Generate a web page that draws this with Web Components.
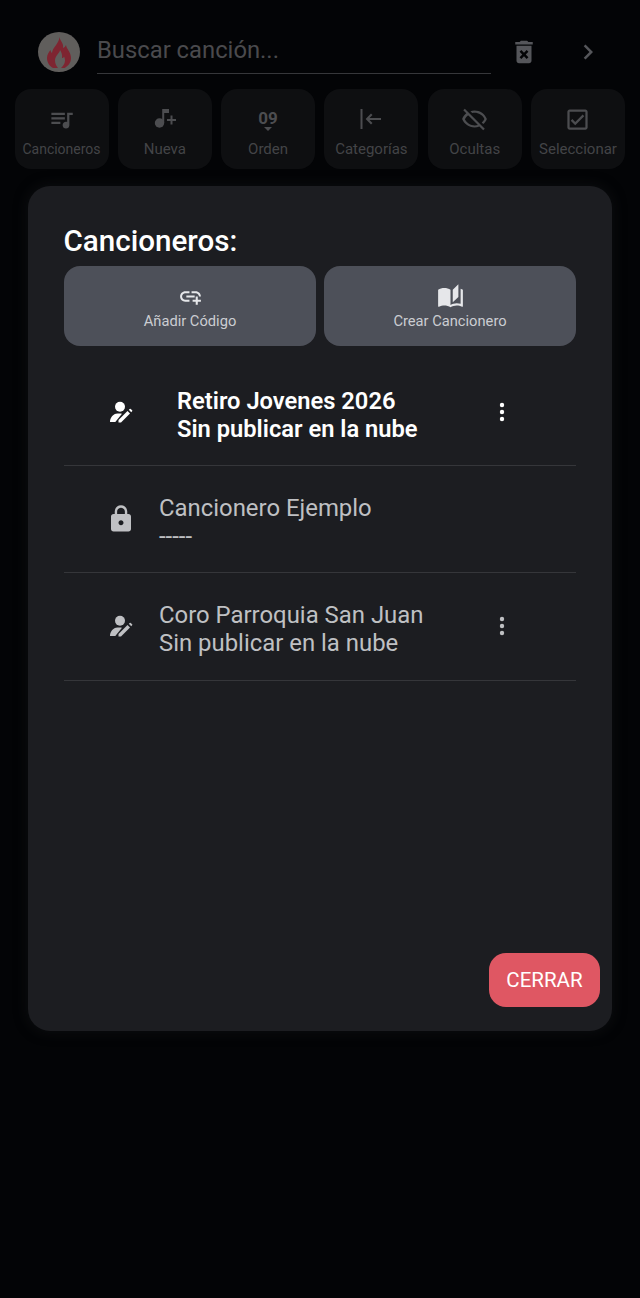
<!doctype html>
<html lang="es">
<head>
<meta charset="utf-8">
<title>Cancioneros</title>
<style>
  html, body { margin: 0; padding: 0; background: #030406; }
  body { width: 640px; height: 1298px; overflow: hidden; font-family: Roboto, "Noto Sans", sans-serif; }
</style>
</head>
<body>
<app-header></app-header>
<tool-bar>
  <tool-button tight label="Cancioneros" icon="queue"></tool-button>
  <tool-button label="Nueva" icon="noteadd"></tool-button>
  <tool-button label="Orden" icon="order"></tool-button>
  <tool-button label="Categorías" icon="tab"></tool-button>
  <tool-button label="Ocultas" icon="eyeoff"></tool-button>
  <tool-button label="Seleccionar" icon="check"></tool-button>
</tool-bar>
<song-dialog heading="Cancioneros:">
  <action-button slot="actions" label="Añadir Código" icon="addlink" size="25"></action-button>
  <action-button slot="actions" label="Crear Cancionero" icon="book" size="27"></action-button>
  <book-row selected icon="editor" more title-text="Retiro Jovenes 2026" sub="Sin publicar en la nube"></book-row>
  <book-row icon="lock" title-text="Cancionero Ejemplo" sub="-----"></book-row>
  <book-row icon="editor" more title-text="Coro Parroquia San Juan" sub="Sin publicar en la nube"></book-row>
  <close-button slot="footer">CERRAR</close-button>
</song-dialog>

<script>
const ICONS = {
  queue: '<path d="M15 6H3v2h12V6zm0 4H3v2h12v-2zM3 16h8v-2H3v2zM17 6v8.18c-.31-.11-.65-.18-1-.18-1.66 0-3 1.34-3 3s1.34 3 3 3 3-1.34 3-3V8h3V6h-5z"/>',
  noteadd: '<circle cx="6.500" cy="16" r="4.700"/><path d="M9.200 2H16v4h-4.800v10H9.200z"/><path d="M17.500 8.500h2v3.500H23v2h-3.500v3.500h-2V14H14v-2h3.500z"/>',
  tab: '<path d="M1.500 2h2v20h-2z"/><path d="M22 11H10.500l3-3L12 6.600 6.600 12l5.400 5.400 1.500-1.400-3-3H22z"/>',
  eyeoff: '<path d="M12 6c3.79 0 7.17 2.13 8.82 5.500-.59 1.220-1.420 2.270-2.410 3.120l1.410 1.410c1.390-1.230 2.490-2.770 3.180-4.530C21.270 7.110 17 4 12 4c-1.270 0-2.490.2-3.640.57l1.650 1.650C10.660 6.090 11.320 6 12 6zM2.010 3.870l2.680 2.680C3.060 7.830 1.770 9.530 1 11.500 2.730 15.890 7 19 12 19c1.520 0 2.980-.29 4.320-.82l3.420 3.420 1.410-1.410L3.420 2.450 2.010 3.870zm4.100 4.100l7.910 7.910 .98.98c-.88.24-1.800.38-2.750.38-3.790 0-7.170-2.130-8.820-5.500.7-1.430 1.720-2.610 2.930-3.530z"/>',
  check: '<path d="M19 3H5c-1.100 0-2 .9-2 2v14c0 1.100.9 2 2 2h14c1.100 0 2-.9 2-2V5c0-1.100-.9-2-2-2zm0 16H5V5h14v14zM17.990 9l-1.410-1.420-6.590 6.590-2.580-2.570-1.420 1.410 4 3.990z"/>',
  trash: '<path d="M6 19c0 1.100.9 2 2 2h8c1.100 0 2-.9 2-2V7H6v12zm2.460-7.120l1.410-1.410L12 12.590l2.120-2.120 1.410 1.410L13.410 14l2.120 2.120-1.410 1.410L12 15.410l-2.120 2.120-1.410-1.410L10.590 14l-2.130-2.120zM15.500 4l-1-1h-5l-1 1H5v2h14V4z"/>',
  chevron: '<path d="M10 6L8.590 7.410 13.170 12l-4.580 4.590L10 18l6-6z"/>',
  addlink: '<path d="M8 11h8v2H8zm12.100 1H22c0-2.760-2.240-5-5-5h-4v1.900h4c1.710 0 3.100 1.390 3.100 3.100zM3.900 12c0-1.710 1.390-3.100 3.100-3.100h4V7H7c-2.760 0-5 2.240-5 5s2.240 5 5 5h4v-1.900H7c-1.710 0-3.100-1.390-3.100-3.100zM19 12h-2v3h-3v2h3v3h2v-3h3v-2h-3z"/>',
  book: '<path d="M19 1l-5 5v11l5-4.500V1zM1 6v14.650c0 .25.25.5.5.5.1 0 .15-.05.25-.05C3.100 20.450 5.050 20 6.500 20c1.950 0 4.050.4 5.500 1.500V6c-1.450-1.100-3.550-1.500-5.500-1.500S2.450 4.900 1 6zm22 13.500V6c-.6-.45-1.250-.75-2-1v13.500c-1.100-.35-2.300-.5-3.500-.5-1.700 0-4.150.65-5.500 1.500v2c1.350-.85 3.800-1.500 5.500-1.500 1.650 0 3.350.3 4.750 1.050.1.05.15.05.25.05.25 0 .5-.25.5-.5v-1.100z"/>',
  editor: '<circle cx="11" cy="6.700" r="5"/><path d="M1 22c0-4 3-7.600 6-8.200 2-.4 4-.4 6-.1L6.300 22z"/><path d="M9.500 22.500V20l9-9 2.500 2.500-9 9z"/><path d="M19.800 9.800l.9-.9a.8.8 0 0 1 1.100 0l1.300 1.300a.8.8 0 0 1 0 1.100l-.9.9z"/>',
  lock: '<path d="M18 8h-1V6c0-2.760-2.240-5-5-5S7 3.240 7 6v2H6c-1.100 0-2 .9-2 2v10c0 1.100.9 2 2 2h12c1.100 0 2-.9 2-2V10c0-1.100-.9-2-2-2zm-6 9c-1.100 0-2-.9-2-2s.9-2 2-2 2 .9 2 2-.9 2-2 2zm3.100-9H8.900V6c0-1.710 1.390-3.100 3.100-3.100 1.710 0 3.100 1.390 3.100 3.100v2z"/>',
  more: '<circle cx="12" cy="5" r="2.200"/><circle cx="12" cy="12" r="2.200"/><circle cx="12" cy="19" r="2.200"/>'
}

function svgIcon (name, size) {
  return `<svg width="${size}" height="${size}" viewBox="0 0 24 24" fill="currentColor" aria-hidden="true">${ICONS[name]}</svg>`
}

class AppHeader extends HTMLElement {
  constructor () {
    super()
    this.attachShadow({mode: 'open'})
  }

  connectedCallback () {
    this.shadowRoot.innerHTML = `<style>
      :host { display: flex; align-items: flex-start; height: 89px; padding: 32px 0 0 38px; box-sizing: border-box; color: #55565a; }
      .logo { flex: none; width: 42px; height: 40px; border-radius: 50%; background: #605e5c; display: flex; align-items: center; justify-content: center; }
      .search { margin-left: 17px; width: 394px; height: 42px; box-sizing: border-box; border-bottom: 1px solid #36373a; font-size: 23.800px; line-height: 36px; color: #4a4a4d; }
      .btn { flex: none; display: flex; justify-content: center; height: 30px; padding-top: 5px; }
      .trash { width: 30px; margin-left: 18px; }
      .chev { width: 30px; margin-left: 34px; }
    </style>
    <div class="logo">
      <svg width="24" height="31" viewBox="0 0 24 31" fill="#7e2531" aria-hidden="true">
        <path fill-rule="evenodd" d="M12.500 0C13 4 17 6 16 11c1.200-.5 2.400-1.500 3-3 .5 4 5 7 5 13 0 5-3 8-6.500 10H6C2.500 29 0 25.500 0 21c0-3.500 2-6 3.500-8 .2 1.500.7 2.500 1.500 3 .5-6 7-9 7.500-16zM13 13c0 3-5 5.500-5 10.500 0 3 1.500 5.500 3 7.500h3c1.500-1.500 4-4 4-7.500 0-1.500-.5-3-1-4-.5 1-1 1.500-2 1.500 .5-3-.5-6-2-8z"/>
      </svg>
    </div>
    <div class="search">Buscar canción...</div>
    <div class="btn trash">${svgIcon('trash', 30)}</div>
    <div class="btn chev">${svgIcon('chevron', 30)}</div>`
  }
}

class ToolBar extends HTMLElement {
  constructor () {
    super()
    this.attachShadow({mode: 'open'})
    this.shadowRoot.innerHTML = `<style>
      :host { display: grid; grid-template-columns: repeat(6, 94px); column-gap: 9.300px; padding-left: 14.500px; height: 80px; }
    </style><slot></slot>`
  }
}

class ToolButton extends HTMLElement {
  constructor () {
    super()
    this.attachShadow({mode: 'open'})
  }

  connectedCallback () {
    const icon = this.getAttribute('icon')
    let glyph = svgIcon(icon, icon === 'noteadd' || icon === 'tab' ? 24 : 27)
    if (icon === 'order') {
      glyph = `<div class="order"><span>09</span><svg width="8" height="4" viewBox="0 0 10 5" fill="currentColor" aria-hidden="true"><path d="M0 0h10L5 5z"/></svg></div>`
    }
    this.shadowRoot.innerHTML = `<style>
      :host { display: flex; flex-direction: column; align-items: center; height: 80px; box-sizing: border-box; padding-top: 18px; background: #0e0f11; border-radius: 16px; color: #434447; }
      .ico { height: 24px; display: flex; align-items: center; justify-content: center; color: #4c4d50; }
      .label { margin-top: 8px; font-size: 15px; line-height: 20px; white-space: nowrap; }
      :host([tight]) .label { font-size: 14px; }
      .order { display: flex; flex-direction: column; align-items: center; height: 24px; }
      .order span { font-size: 17px; font-weight: 700; line-height: 18px; margin-top: 2px; }
      .order svg { margin-top: 0; }
    </style>
    <div class="ico">${glyph}</div>
    <div class="label">${this.getAttribute('label')}</div>`
  }
}

class SongDialog extends HTMLElement {
  constructor () {
    super()
    this.attachShadow({mode: 'open'})
  }

  connectedCallback () {
    this.shadowRoot.innerHTML = `<style>
      :host { display: flex; flex-direction: column; width: 584px; height: 845px; margin: 17px 0 0 28px; box-sizing: border-box; background: #1c1d21; border-radius: 22px; padding: 32px 12px 24px 36px; box-shadow: 0 0 12px 2px rgba(12,13,15,.9); }
      h2 { margin: 0 0 0 -.5px; font-size: 29.600px; font-weight: 500; line-height: 46px; height: 48px; color: #fff; }
      .actions { display: flex; gap: 8px; width: 512px; }
      .list { margin-top: 12.400px; width: 512px; flex: 1; }
      .footer { display: flex; justify-content: flex-end; }
    </style>
    <h2>${this.getAttribute('heading')}</h2>
    <div class="actions"><slot name="actions"></slot></div>
    <div class="list"><slot></slot></div>
    <div class="footer"><slot name="footer"></slot></div>`
  }
}

class ActionButton extends HTMLElement {
  constructor () {
    super()
    this.attachShadow({mode: 'open'})
  }

  connectedCallback () {
    this.shadowRoot.innerHTML = `<style>
      :host { flex: 1; display: flex; flex-direction: column; align-items: center; height: 80px; box-sizing: border-box; padding-top: 18px; background: #4d5059; border-radius: 16px; color: #e6e7ea; }
      .ico { height: 24px; display: flex; align-items: center; justify-content: center; }
      .label { margin-top: 3px; font-size: 14.700px; line-height: 20px; color: #cbcdd2; }
    </style>
    <div class="ico">${svgIcon(this.getAttribute('icon'), this.getAttribute('size'))}</div>
    <div class="label">${this.getAttribute('label')}</div>`
  }
}

class BookRow extends HTMLElement {
  constructor () {
    super()
    this.attachShadow({mode: 'open'})
  }

  connectedCallback () {
    const more = this.hasAttribute('more') ? svgIcon('more', 24) : ''
    const icon = this.getAttribute('icon')
    this.shadowRoot.innerHTML = `<style>
      :host { display: flex; align-items: center; height: 107.400px; box-sizing: border-box; padding: 0 62px 0 45px; border-bottom: 1px solid #35363a; color: #bfc0c3; }
      :host([selected]) { color: #fff; }
      .ico { flex: none; width: 24px; height: 24px; display: flex; align-items: center; justify-content: center; }
      .ico svg { flex: none; }
      .text { flex: 1; padding: 6px 0 0 26px; font-size: 23.900px; line-height: 28px; white-space: nowrap; }
      :host([selected]) .text { padding-left: 44px; font-weight: 600; font-size: 23.700px; }
      .more { flex: none; width: 24px; height: 24px; margin-left: -24px; }
    </style>
    <div class="ico">${svgIcon(icon, icon === 'lock' ? 30 : 24)}</div>
    <div class="text"><div>${this.getAttribute('title-text')}</div><div>${this.getAttribute('sub')}</div></div>
    <div class="more">${more}</div>`
  }
}

class CloseButton extends HTMLElement {
  constructor () {
    super()
    this.attachShadow({mode: 'open'})
    this.shadowRoot.innerHTML = `<style>
      :host { display: flex; align-items: center; justify-content: center; width: 111px; height: 54px; background: #df5763; border-radius: 17px; color: #fff; font-size: 20.500px; }
    </style><slot></slot>`
  }
}

customElements.define('app-header', AppHeader)
customElements.define('tool-bar', ToolBar)
customElements.define('tool-button', ToolButton)
customElements.define('song-dialog', SongDialog)
customElements.define('action-button', ActionButton)
customElements.define('book-row', BookRow)
customElements.define('close-button', CloseButton)
</script>
</body>
</html>
